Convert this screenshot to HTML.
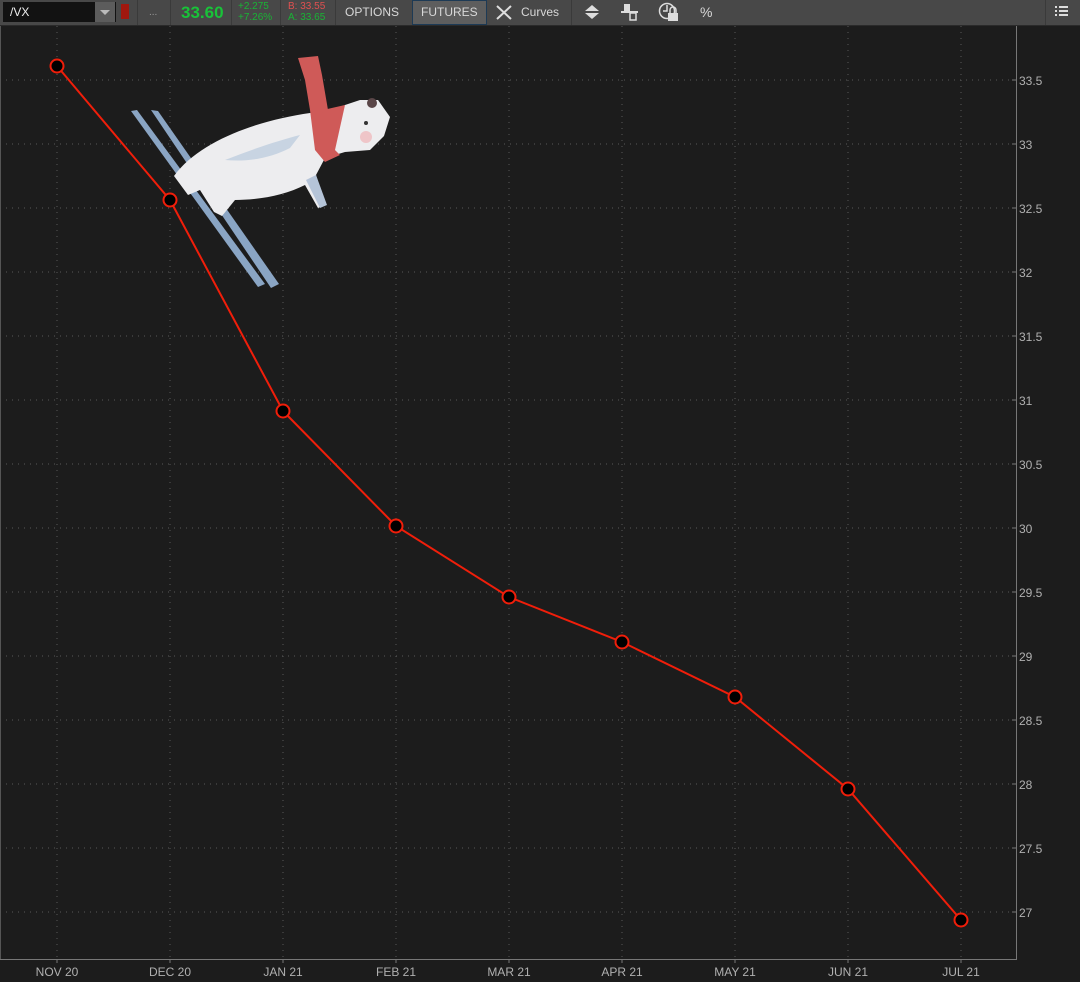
<!DOCTYPE html>
<html><head><meta charset="utf-8"><style>
html,body{margin:0;padding:0;background:#1c1c1c;width:1080px;height:982px;overflow:hidden;font-family:"Liberation Sans",sans-serif}
#tb{position:absolute;left:0;top:0;width:1080px;height:25px;background:#484848;border-bottom:1px solid #2a2a2a}
.t{position:absolute;top:0;height:25px;line-height:25px;font-size:12px;color:#d8d8d8}
.sep{position:absolute;top:0;width:1px;height:25px;background:#3a3a3a}
</style></head><body>
<div id="tb">
  <div style="position:absolute;left:3px;top:2px;width:113px;height:20px;background:#121212"></div>
  <div class="t" style="left:10px;font-size:12px;color:#eee">/VX</div>
  <div style="position:absolute;left:95px;top:2px;width:20px;height:20px;background:#5c5c5c"></div>
  <div style="position:absolute;left:100px;top:10px;width:0;height:0;border-left:5px solid transparent;border-right:5px solid transparent;border-top:5px solid #bbb"></div>
  <div style="position:absolute;left:121px;top:4px;width:8px;height:15px;background:#a0180e"></div>
  <div class="sep" style="left:137px"></div>
  <div class="t" style="left:149px;font-size:10px;color:#999">...</div>
  <div class="sep" style="left:170px"></div>
  <div class="t" style="left:181px;font-size:17px;font-weight:bold;color:#19c239">33.60</div>
  <div class="sep" style="left:231px"></div>
  <div style="position:absolute;left:238px;top:1px;font-size:10px;line-height:11px;color:#19b335">+2.275<br>+7.26%</div>
  <div class="sep" style="left:280px"></div>
  <div style="position:absolute;left:288px;top:1px;font-size:10px;line-height:11px;color:#e05050">B: 33.55<br><span style="color:#19b335">A: 33.65</span></div>
  <div class="sep" style="left:335px"></div>
  <div class="t" style="left:345px">OPTIONS</div>
  <div style="position:absolute;left:412px;top:0;width:73px;height:23px;background:#5e5e5e;border:1px solid #1d3a55"></div>
  <div class="t" style="left:421px">FUTURES</div>
  <svg style="position:absolute;left:495px;top:4px" width="18" height="17" viewBox="0 0 18 17"><path d="M2 2 L9 8.5 L16 2 M2 15 L9 8.5 L16 15" stroke="#ddd" stroke-width="2" fill="none"/></svg>
  <div class="t" style="left:521px">Curves</div>
  <div class="sep" style="left:571px"></div>
  <svg style="position:absolute;left:583px;top:4px" width="18" height="16"><path d="M2 7 L9 1 L16 7Z M2 9 L9 15 L16 9Z" fill="#ddd"/></svg>
  <svg style="position:absolute;left:620px;top:3px" width="20" height="18"><rect x="4" y="1" width="6" height="8" fill="#ddd"/><rect x="1" y="8" width="17" height="2" fill="#ddd"/><rect x="10" y="10" width="6" height="7" fill="none" stroke="#ddd" stroke-width="1.5"/></svg>
  <svg style="position:absolute;left:658px;top:2px" width="22" height="20"><circle cx="9" cy="9" r="7.5" fill="none" stroke="#ddd" stroke-width="1.5"/><path d="M9 3v6h-4" stroke="#ddd" stroke-width="1.5" fill="none"/><rect x="10" y="11" width="10" height="8" fill="#ddd"/><path d="M12 11v-3a3 3 0 0 1 6 0v3" stroke="#ddd" stroke-width="1.5" fill="none"/></svg>
  <div class="t" style="left:700px;font-size:14px">%</div>
  <div class="sep" style="left:1045px"></div>
  <svg style="position:absolute;left:1055px;top:6px" width="14" height="12"><path d="M0 1h2M4 1h9M0 5h2M4 5h9M0 9h2M4 9h9" stroke="#ddd" stroke-width="2"/></svg>
</div>
<svg style="position:absolute;left:0;top:26px" width="1080" height="956" viewBox="0 26 1080 956">
  <rect x="0" y="26" width="1" height="934" fill="#555"/>
  <g stroke="#585858" stroke-width="1" stroke-dasharray="1,5">
    <path d="M57 26V959M170 26V959M283 26V959M396 26V959M509 26V959M622 26V959M735 26V959M848 26V959M961 26V959"/>
    <path d="M0 80H1016M0 144H1016M0 208H1016M0 272H1016M0 336H1016M0 400H1016M0 464H1016M0 528H1016M0 592H1016M0 656H1016M0 720H1016M0 784H1016M0 848H1016M0 912H1016"/>
  </g>
  <path d="M1016.5 26V959.5H0" stroke="#777" fill="none"/>
  <g stroke="#777"><path d="M1012 80h4M1012 144h4M1012 208h4M1012 272h4M1012 336h4M1012 400h4M1012 464h4M1012 528h4M1012 592h4M1012 656h4M1012 720h4M1012 784h4M1012 848h4M1012 912h4"/>
  <path d="M57 959v4M170 959v4M283 959v4M396 959v4M509 959v4M622 959v4M735 959v4M848 959v4M961 959v4"/></g>
  <g font-size="12" fill="#b0b0b0" font-family="Liberation Sans,sans-serif">
    <text x="1019" y="85">33.5</text><text x="1019" y="149">33</text><text x="1019" y="213">32.5</text><text x="1019" y="277">32</text><text x="1019" y="341">31.5</text><text x="1019" y="405">31</text><text x="1019" y="469">30.5</text><text x="1019" y="533">30</text><text x="1019" y="597">29.5</text><text x="1019" y="661">29</text><text x="1019" y="725">28.5</text><text x="1019" y="789">28</text><text x="1019" y="853">27.5</text><text x="1019" y="917">27</text>
  </g>
  <g font-size="12" fill="#b0b0b0" text-anchor="middle" font-family="Liberation Sans,sans-serif">
    <text x="57" y="976">NOV 20</text><text x="170" y="976">DEC 20</text><text x="283" y="976">JAN 21</text><text x="396" y="976">FEB 21</text><text x="509" y="976">MAR 21</text><text x="622" y="976">APR 21</text><text x="735" y="976">MAY 21</text><text x="848" y="976">JUN 21</text><text x="961" y="976">JUL 21</text>
  </g>
  <g>
    <path d="M131 111 L137 110 L265 284 L258 287Z" fill="#8aa5c4"/>
    <path d="M151 110 L158 111 L279 284 L271 288Z" fill="#8aa5c4"/>
    <path d="M174 176 C200 140 260 120 310 113 L330 110 L360 100 L378 100 L390 117 L384 136 L370 150 L345 152 L325 158 L316 175 L325 205 L318 208 L305 185 C285 195 260 200 235 200 L222 216 L214 212 L200 190 L188 195Z" fill="#ededef"/>
    <path d="M225 160 C250 150 280 140 300 135 L290 148 C270 158 250 162 225 160Z" fill="#c8d4e2"/>
    <path d="M306 180 L316 175 L327 205 L320 208Z" fill="#b5c4d8"/>
    <path d="M298 58 L318 56 L322 75 L328 110 L333 148 L340 155 L325 162 L315 150 L310 110 L305 80Z" fill="#cf5a58"/>
    <path d="M323 110 L345 105 L335 150 L320 150Z" fill="#cf5a58"/>
    <circle cx="372" cy="103" r="5" fill="#5a4648"/>
    <circle cx="366" cy="137" r="6" fill="#efc5c8"/>
    <circle cx="366" cy="123" r="2" fill="#333"/>
  </g>
  <polyline points="57,66 170,200 283,411 396,526 509,597 622,642 735,697 848,789 961,920" fill="none" stroke="#f01e0a" stroke-width="2"/>
  <g fill="#000" stroke="#f01e0a" stroke-width="2">
    <circle cx="57" cy="66" r="6.5"/><circle cx="170" cy="200" r="6.5"/><circle cx="283" cy="411" r="6.5"/><circle cx="396" cy="526" r="6.5"/><circle cx="509" cy="597" r="6.5"/><circle cx="622" cy="642" r="6.5"/><circle cx="735" cy="697" r="6.5"/><circle cx="848" cy="789" r="6.5"/><circle cx="961" cy="920" r="6.5"/>
  </g>
</svg>
</body></html>
